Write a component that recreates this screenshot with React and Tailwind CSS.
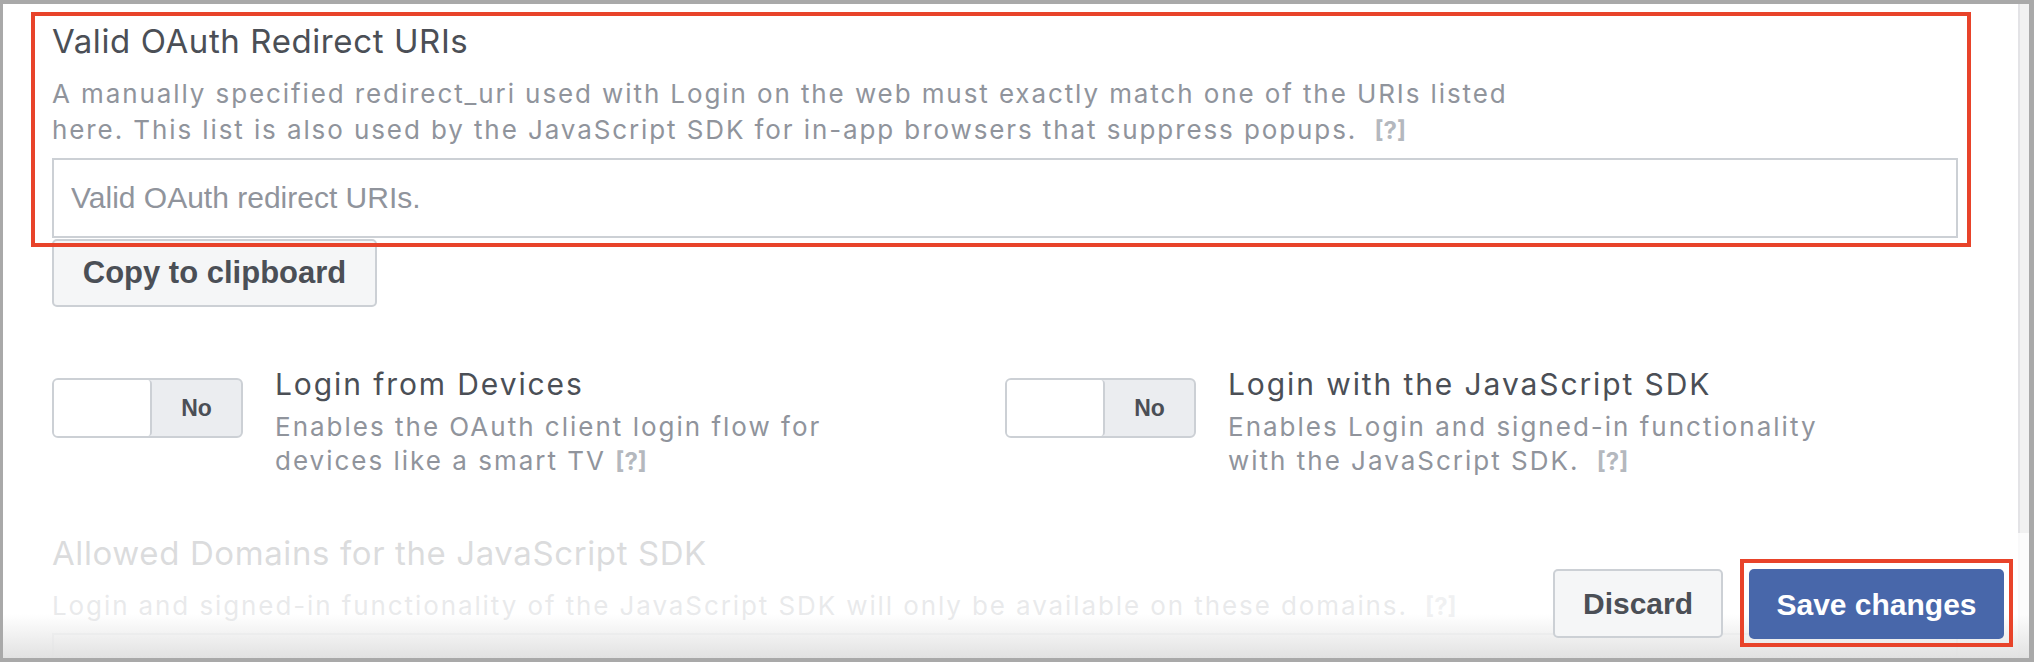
import React from 'react';

const Help = ({ wide }) => (
    <span className={`${wide ? 'ml-[8px]' : ''} tracking-normal text-[24px] font-bold text-[#b4b8be]`}>[?]</span>
);

const Toggle = () => (
    <div className="mt-[12px] flex h-[60px] w-[191px] shrink-0 overflow-hidden rounded-[6px] border-2 border-[#ccd0d5] bg-[#ebedf0]">
        <div className="w-[98px] rounded-r-[4px] border-r-2 border-[#ccd0d5] bg-white"></div>
        <div className="flex flex-1 items-center justify-center font-['Liberation_Sans',Arial,sans-serif] text-[23px] font-bold text-[#4b4f56]">No</div>
    </div>
);

const ToggleSetting = ({ title, children }) => (
    <div className="flex w-[953px] items-start gap-[32px]">
        <Toggle />
        <div className="w-[600px]">
            <h3 className="text-[30px] leading-[36px] tracking-[1.9px] text-[#4b4f56]">{title}</h3>
            <p className="mt-[8px] text-[26px] leading-[34px] tracking-[2px] text-[#90949c]">{children}</p>
        </div>
    </div>
);

const App = () => {
    return (
        <div className="h-[662px] w-[2034px] bg-[#a9a9a9] pb-[4px] pl-[3px] pr-[5px] pt-[4px]">
            <div className="relative flex h-full overflow-hidden bg-white font-['Inter',sans-serif]">
                {/* page content */}
                <div className="flex-1 pl-[49px] pr-[60px] pt-[17px]">
                    <div className="relative">
                        <h2 className="text-[33px] leading-[40px] tracking-[0.6px] text-[#4b4f56]">Valid OAuth Redirect URIs</h2>
                        <p className="mt-[15px] max-w-[1490px] text-[26px] leading-[36px] tracking-[1.9px] text-[#90949c]">
                            A manually specified redirect_uri used with Login on the web must exactly match one of the URIs listed here. This list is also used by the JavaScript SDK for in-app browsers that suppress popups. <Help wide />
                        </p>
                        <input
                            readOnly
                            placeholder="Valid OAuth redirect URIs."
                            className="mt-[9px] block h-[80px] w-full border-2 border-[#ccd0d5] px-[17px] font-['Liberation_Sans',Arial,sans-serif] text-[30px] outline-none placeholder:text-[#90949c]"
                        />
                        {/* annotation */}
                        <div className="pointer-events-none absolute -bottom-[9px] -left-[21px] -right-[13px] -top-[9px] border-4 border-[#e8432a]"></div>
                    </div>

                    <button className="mt-[1px] h-[68px] w-[325px] rounded-[5px] border-2 border-[#ccd0d5] bg-[#f5f6f7] font-['Liberation_Sans',Arial,sans-serif] text-[31px] font-bold text-[#4b4f56]">
                        Copy to clipboard
                    </button>

                    <div className="mt-[59px] flex">
                        <ToggleSetting title="Login from Devices">
                            Enables the OAuth client login flow for devices like a smart TV <Help />
                        </ToggleSetting>
                        <ToggleSetting title="Login with the JavaScript SDK">
                            Enables Login and signed-in functionality with the JavaScript SDK. <Help wide />
                        </ToggleSetting>
                    </div>

                    <h2 className="mt-[54px] text-[33px] leading-[40px] tracking-[0.6px] text-[#4b4f56]">Allowed Domains for the JavaScript SDK</h2>
                    <p className="mt-[15px] text-[26px] leading-[36px] tracking-[1.9px] text-[#90949c]">
                        Login and signed-in functionality of the JavaScript SDK will only be available on these domains. <Help wide />
                    </p>
                    <div className="mt-[8px] h-[80px] w-full border-2 border-[#ccd0d5]"></div>
                </div>

                {/* scrollbar track */}
                <div className="w-[62px] shrink-0 border-l-2 border-[#e3e3e6] bg-[#f1f1f1]"></div>

                {/* sticky footer */}
                <div className="absolute bottom-0 left-0 right-0 flex h-[125px] items-start justify-end gap-[26px] bg-linear-to-b from-white/80 via-white/80 via-65% to-[#e2e2e2] pr-[25px] pt-[36px]">
                    <button className="h-[69px] w-[170px] rounded-[5px] border-2 border-[#ccd0d5] bg-[#f5f6f7] font-['Liberation_Sans',Arial,sans-serif] text-[30px] font-bold text-[#4b4f56]">
                        Discard
                    </button>
                    <div className="relative">
                        <button className="h-[70px] w-[255px] rounded-[5px] bg-[#4867aa] font-['Liberation_Sans',Arial,sans-serif] text-[30px] font-bold text-white">
                            Save changes
                        </button>
                        <div className="pointer-events-none absolute -bottom-[8px] -left-[9px] -right-[9px] -top-[10px] border-4 border-[#e8432a]"></div>
                    </div>
                </div>
            </div>
        </div>
    );
};

export default App;
